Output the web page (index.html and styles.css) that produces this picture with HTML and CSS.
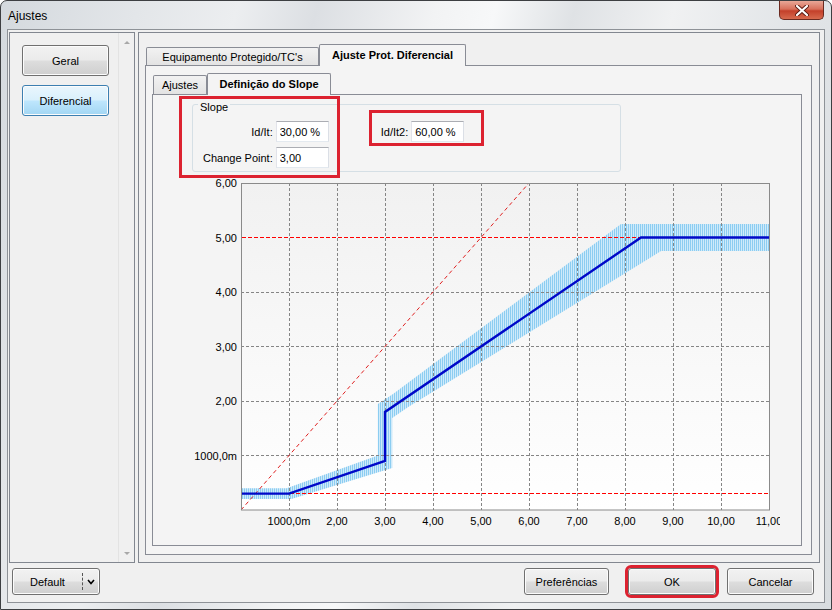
FILE: index.html
```html
<!DOCTYPE html>
<html lang="pt-BR">
  <head>
    <meta charset="UTF-8" />
    <title>Ajustes</title>
    <link rel="stylesheet" href="styles.css">
  </head>
  <body>
    <div class="window">
      <div class="titlebar">
        <span class="title">Ajustes</span>
        <span class="close">
          <svg width="14" height="11" viewBox="0 0 14 11">
            <path d="M2 1 L12 10 M12 1 L2 10" stroke="#5a1a12" stroke-width="4" stroke-linecap="round" />
            <path d="M2 1 L12 10 M12 1 L2 10" stroke="#ffffff" stroke-width="2.2" stroke-linecap="round" />
          </svg>
        </span>
      </div>

      <div class="client">
        <div class="panels">
          <div class="nav">
            <div class="nav-buttons">
              <button class="btn nav-btn">Geral</button>
              <button class="btn nav-btn active">Diferencial</button>
            </div>
            <div class="scrollbar">
              <span class="arrow up"></span>
              <span class="arrow down"></span>
            </div>
          </div>

          <div class="main">
            <div class="tabs">
              <div class="tab tab-equip">Equipamento Protegido/TC's</div>
              <div class="tab selected tab-prot">Ajuste Prot. Diferencial</div>
            </div>
            <div class="page outer-page">
              <div class="tabs">
                <div class="tab tab-ajustes">Ajustes</div>
                <div class="tab selected tab-slope">Definição do Slope</div>
              </div>
              <div class="page inner-page">
                <!-- marcações em vermelho -->
                <span class="mark mark-slope"></span>
                <span class="mark mark-it2"></span>

                <div class="group">
                  <span class="group-title">Slope</span>
                  <div class="group-body">
                    <div class="fields">
                      <label>Id/It:</label>
                      <input type="text" value="30,00 %" />
                      <label>Change Point:</label>
                      <input type="text" value="3,00" />
                    </div>
                    <div class="field-it2">
                      <label>Id/It2:</label>
                      <input type="text" value="60,00 %" />
                    </div>
                  </div>
                </div>

                <svg class="chart" width="627" height="370" viewBox="153 172 627 370">
                  <defs>
                    <linearGradient id="plotBg" x1="0" y1="0" x2="0" y2="1">
                      <stop offset="0" stop-color="#f1f1f1" />
                      <stop offset="1" stop-color="#ffffff" />
                    </linearGradient>
                    <pattern id="hatch" width="2" height="4" patternUnits="userSpaceOnUse">
                      <rect width="2" height="4" fill="#cfeafa" />
                      <rect width="1" height="4" fill="#8ccdf1" />
                    </pattern>
                  </defs>

                  <rect x="241" y="183" width="528" height="327" fill="url(#plotBg)" />

                  <!-- faixa de tolerância -->
                  <polygon fill="url(#hatch)"
                    points="241,488.2 286.6,488.2 377.8,455.5 377.8,404 393,394 621,223.9 769,223.9
                            769,251.1 661,251.1 409,406.5 392.2,418 392.2,468 291.4,499.1 241,499.1" />

                  <!-- grade -->
                  <g stroke="#858585" stroke-width="1" stroke-dasharray="3 2">
                    <path d="M289.5 183V510 M337.5 183V510 M385.5 183V510 M433.5 183V510 M481.5 183V510
                             M529.5 183V510 M577.5 183V510 M625.5 183V510 M673.5 183V510 M721.5 183V510" />
                    <path d="M241 292.5H769 M241 346.5H769 M241 401.5H769 M241 455.5H769" />
                  </g>
                  <g stroke="#ff0000" stroke-width="1" stroke-dasharray="4 2">
                    <path d="M242 237.5H769 M242 493.5H769" />
                  </g>
                  <path d="M241 510 L529 183" stroke="#e02020" stroke-width="1" stroke-dasharray="4 3" fill="none" />

                  <!-- curva -->
                  <polyline fill="none" stroke="#0008c8" stroke-width="2.4"
                    points="241,493.6 289,493.6 385,461 385,412 641,237.5 769,237.5" />

                  <rect x="241.5" y="183.5" width="528" height="326.5" fill="none" stroke="#8a8a8a" />

                  <g class="ylabels" text-anchor="end">
                    <text x="237" y="187">6,00</text>
                    <text x="237" y="241.5">5,00</text>
                    <text x="237" y="296">4,00</text>
                    <text x="237" y="350.5">3,00</text>
                    <text x="237" y="405">2,00</text>
                    <text x="237" y="459.5">1000,0m</text>
                  </g>
                  <g class="xlabels" text-anchor="middle">
                    <text x="289" y="525">1000,0m</text>
                    <text x="337" y="525">2,00</text>
                    <text x="385" y="525">3,00</text>
                    <text x="433" y="525">4,00</text>
                    <text x="481" y="525">5,00</text>
                    <text x="529" y="525">6,00</text>
                    <text x="577" y="525">7,00</text>
                    <text x="625" y="525">8,00</text>
                    <text x="673" y="525">9,00</text>
                    <text x="721" y="525">10,00</text>
                    <text x="769" y="525">11,00</text>
                  </g>
                </svg>
              </div>
            </div>
          </div>
        </div>

        <div class="footer">
          <button class="btn split">
            <span class="split-label">Default</span>
            <span class="split-arrow">
              <svg width="8" height="6" viewBox="0 0 8 6"><path d="M1 1 L4 4.5 L7 1" stroke="#000" stroke-width="1.6" fill="none" /></svg>
            </span>
          </button>
          <span class="spacer"></span>
          <button class="btn foot-btn pref">Preferências</button>
          <button class="btn foot-btn ok">OK</button>
          <button class="btn foot-btn cancel">Cancelar</button>
        </div>
      </div>
    </div>
  </body>
</html>
```

FILE: styles.css
```css
* {
  box-sizing: border-box;
}
body {
  margin: 0;
  font-family: "Liberation Sans", Arial, sans-serif;
  font-size: 11px;
  color: #000;
  background: #fff;
}

/* janela */
.window {
  width: 832px;
  height: 610px;
  display: flex;
  flex-direction: column;
  border: 1px solid #3d3f42;
  border-radius: 7px 7px 0 0;
  padding: 0 6px 6px 6px;
  background: linear-gradient(105deg, #d4d9de 0%, #e3e6e9 14%, #eceef0 24%, #dcdfe3 32%,
    #f2f3f4 44%, #f7f8f9 50%, #dfe2e5 58%, #f0f1f2 68%, #e2e5e8 80%, #d8dcdf 100%);
}
.titlebar {
  height: 28px;
  display: flex;
  justify-content: space-between;
  align-items: flex-start;
}
.title {
  font-size: 12px;
  margin: 8px 0 0 1px;
}
.close {
  width: 45px;
  height: 19px;
  margin-right: 1px;
  display: flex;
  align-items: center;
  justify-content: center;
  border: 1px solid #6b2a20;
  border-top: none;
  border-radius: 0 0 5px 5px;
  background: linear-gradient(#e9a797 0%, #d8705b 45%, #c4402a 55%, #d76a4e 100%);
}

.client {
  flex: 1;
  display: flex;
  flex-direction: column;
  background: #f0f0f0;
  border: 1px solid #8e9297;
  padding: 2px 4px 0 1px;
}
.panels {
  height: 531px;
  display: flex;
  gap: 3px;
}

/* botões padrão do windows 7 */
.btn {
  font-family: inherit;
  font-size: 11px;
  color: #000;
  border: 1px solid #707070;
  border-radius: 3px;
  background: linear-gradient(#f2f2f2 0%, #ebebeb 48%, #dddddd 52%, #cfcfcf 100%);
  box-shadow: inset 0 0 0 1px #fcfcfc;
  padding: 0;
}

/* painel da esquerda */
.nav {
  width: 126px;
  border: 1px solid #828790;
  display: flex;
}
.nav-buttons {
  flex: 1;
  display: flex;
  flex-direction: column;
  gap: 9px;
  padding: 12px 0 0 12px;
}
.nav-btn {
  width: 87px;
  height: 31px;
}
.nav-btn.active {
  border-color: #3c7fb1;
  background: linear-gradient(#eaf6fd 0%, #d9f0fc 48%, #bee6fd 52%, #a2d6f3 100%);
}
.scrollbar {
  width: 16px;
  border-left: 1px solid #e3e3e3;
  display: flex;
  flex-direction: column;
  justify-content: space-between;
  align-items: center;
  padding: 8px 0 7px;
}
.arrow {
  width: 0;
  height: 0;
  border-left: 3px solid transparent;
  border-right: 3px solid transparent;
}
.arrow.up {
  border-bottom: 3px solid #a8a8a8;
}
.arrow.down {
  border-top: 3px solid #a8a8a8;
}

/* painel da direita */
.main {
  flex: 1;
  border: 1px solid #828790;
  padding: 11px 7px 7px 6px;
  display: flex;
  flex-direction: column;
}
.tabs {
  display: flex;
  align-items: flex-end;
  margin-left: 1px;
}
.tab {
  height: 18px;
  border: 1px solid #898c95;
  border-bottom: none;
  border-radius: 2px 2px 0 0;
  background: linear-gradient(#f2f2f2, #e3e3e3);
  display: flex;
  align-items: center;
  justify-content: center;
  white-space: nowrap;
}
.tab.selected {
  position: relative;
  z-index: 2;
  height: 22px;
  margin-bottom: -1px;
  font-weight: bold;
  background: #f4f4f4;
}
.tab-equip {
  width: 173px;
}
.tab-prot {
  width: 147px;
  padding-bottom: 2px;
}
.tab-ajustes {
  width: 54px;
  height: 19px;
}
.tab-slope {
  width: 124px;
  padding-bottom: 1px;
}
.page {
  border: 1px solid #898c95;
  background: #f4f4f4;
}
.outer-page {
  flex: 1;
  display: flex;
  flex-direction: column;
  padding: 7px 9px 8px 6px;
}
.inner-page {
  flex: 1;
  position: relative;
  padding: 0;
}

/* grupo Slope */
.group {
  width: 429px;
  height: 68px;
  margin: 9px 0 0 39px;
  border: 1px solid #d5dfe5;
  border-radius: 3px;
  padding: 0 0 5px 10px;
}
.group-title {
  display: inline-block;
  margin: -5px 0 0 -5px;
  padding: 0 2px;
  line-height: 14px;
  background: #f4f4f4;
  vertical-align: top;
}
.group-body {
  display: flex;
  align-items: flex-start;
  margin-top: 4px;
}
.fields {
  display: grid;
  grid-template-columns: auto 53px;
  grid-auto-rows: 21px;
  row-gap: 5px;
  column-gap: 3px;
  align-items: center;
}
.fields label {
  text-align: right;
}
.field-it2 {
  display: flex;
  align-items: center;
  gap: 3px;
  margin-left: 52px;
}
input[type="text"] {
  width: 53px;
  height: 21px;
  font-family: inherit;
  font-size: 11px;
  padding: 0 3px;
  border: 1px solid;
  border-color: #abadb3 #dbdfe6 #e3e9ef #e2e3ea;
  background: #fff;
  outline: none;
}

.chart {
  display: block;
}
.chart text {
  font-family: "Liberation Sans", Arial, sans-serif;
  font-size: 11px;
  fill: #000;
}

/* destaques vermelhos sobre a tela */
.mark {
  position: absolute;
  border: 3px solid #dc2230;
}
.mark-slope {
  left: 26px;
  top: 1px;
  width: 161px;
  height: 82px;
}
.mark-it2 {
  left: 216px;
  top: 15px;
  width: 115px;
  height: 36px;
}

/* rodapé */
.footer {
  display: flex;
  align-items: flex-start;
  padding: 5px 6px 0 3px;
}
.split {
  width: 88px;
  height: 27px;
  display: flex;
  align-items: stretch;
}
.split-label {
  width: 70px;
  display: flex;
  align-items: center;
  justify-content: center;
  border-right: 1px dashed #555;
  margin: 4px 0;
}
.split-arrow {
  flex: 1;
  display: flex;
  align-items: center;
  justify-content: center;
}
.spacer {
  flex: 1;
}
.foot-btn {
  height: 27px;
}
.pref {
  width: 85px;
}
.ok {
  width: 88px;
  margin-left: 19px;
  outline: 3px solid #dc2230;
  outline-offset: 0;
}
.cancel {
  width: 87px;
  margin-left: 11px;
}
```
